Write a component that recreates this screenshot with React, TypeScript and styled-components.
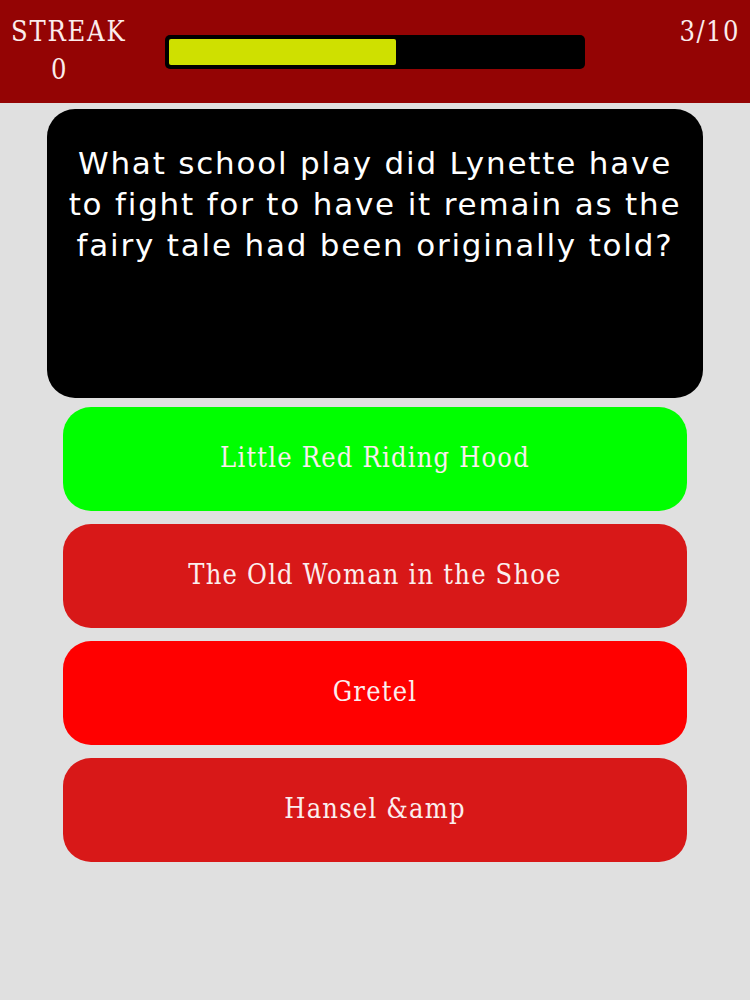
import React from "react";
import styled, { createGlobalStyle } from "styled-components";

const Global = createGlobalStyle`
  html, body { margin: 0; padding: 0; background: #e0e0e0; }
  #root { min-height: 1000px; background: #e0e0e0; }
`;

const serif = `"DejaVu Serif Condensed", "DejaVu Serif", "Liberation Serif", serif`;

const Page = styled.div`
  display: flex;
  flex-direction: column;
  width: 750px;
`;

const Header = styled.header`
  height: 103px;
  background: #940404;
  display: flex;
  align-items: flex-start;
  padding: 0 10px 0 11px;
  box-sizing: border-box;
  font-family: ${serif};
  color: #fbecec;
`;

const Streak = styled.div`
  display: flex;
  flex-direction: column;
  font-size: 27px;
  line-height: 38px;
  letter-spacing: 1.8px;
  padding-top: 13px;
  width: 116px;
`;

const StreakValue = styled.span`
  padding-left: 40px;
`;

const BarWrap = styled.div`
  flex: 1;
  display: flex;
  align-items: center;
  height: 103px;
  padding: 0 0 0 38px;
`;

const Bar = styled.div`
  width: 420px;
  height: 34px;
  box-sizing: border-box;
  background: #000;
  border-radius: 5px;
  padding: 4px;
  display: flex;
`;

const Fill = styled.div`
  height: 100%;
  background: #cfe000;
  border-radius: 2px;
`;

const Score = styled.div`
  font-size: 27px;
  line-height: 38px;
  letter-spacing: 1.5px;
  padding-top: 13px;
`;

const Main = styled.main`
  display: flex;
  flex-direction: column;
  align-items: center;
  padding-top: 6px;
`;

const QuestionCard = styled.div`
  width: 656px;
  height: 289px;
  box-sizing: border-box;
  background: #000;
  border-radius: 28px;
  color: #fff;
  font-family: "DejaVu Sans", "Liberation Sans", sans-serif;
  font-size: 31px;
  line-height: 41px;
  letter-spacing: 1.8px;
  text-align: center;
  padding: 34px 14px 0;
`;

const Answers = styled.div`
  display: flex;
  flex-direction: column;
  gap: 13px;
  margin-top: 9px;
`;

const Answer = styled.button<{ $bg: string }>`
  width: 624px;
  height: 104px;
  border: none;
  border-radius: 28px;
  background: ${(p) => p.$bg};
  color: #fbeeee;
  font-family: ${serif};
  font-size: 27px;
  letter-spacing: 1.2px;
  display: flex;
  align-items: center;
  justify-content: center;
  padding: 0 0 4px;
`;

const answers = [
  { text: "Little Red Riding Hood", bg: "#00ff00" },
  { text: "The Old Woman in the Shoe", bg: "#d81818" },
  { text: "Gretel", bg: "#ff0000" },
  { text: "Hansel &amp", bg: "#d81818" },
];

export default function App() {
  const progress = 0.55;
  return (
    <Page>
      <Global />
      <Header>
        <Streak>
          <span>STREAK</span>
          <StreakValue>0</StreakValue>
        </Streak>
        <BarWrap>
          <Bar>
            <Fill style={{ width: `${progress * 100}%` }} />
          </Bar>
        </BarWrap>
        <Score>3/10</Score>
      </Header>
      <Main>
        <QuestionCard>
          What school play did Lynette have to fight for to have it remain as the fairy tale had been originally told?
        </QuestionCard>
        <Answers>
          {answers.map((a) => (
            <Answer key={a.text} $bg={a.bg}>
              {a.text}
            </Answer>
          ))}
        </Answers>
      </Main>
    </Page>
  );
}
